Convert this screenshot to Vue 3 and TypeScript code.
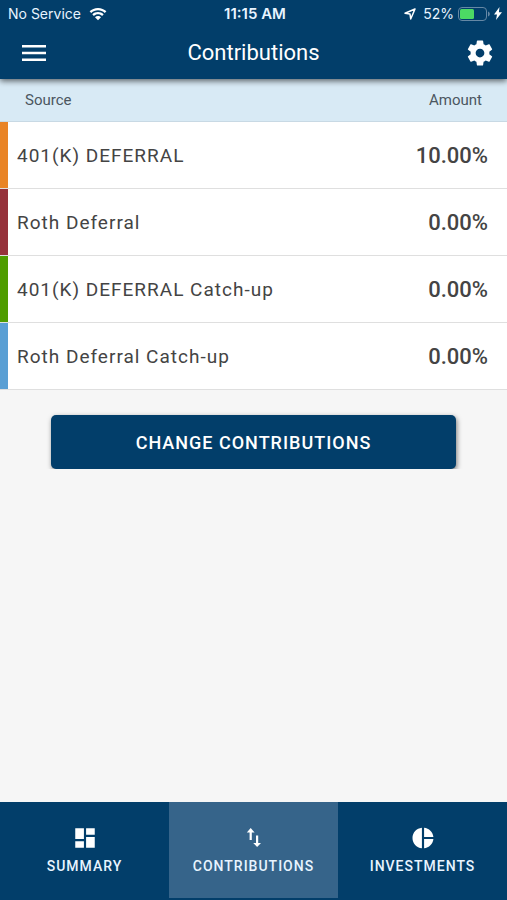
<script setup lang="ts">
interface Contribution {
  source: string
  amount: string
  color: string
}

const contributions: Contribution[] = [
  { source: '401(K) DEFERRAL', amount: '10.00%', color: '#e98426' },
  { source: 'Roth Deferral', amount: '0.00%', color: '#96323b' },
  { source: '401(K) DEFERRAL Catch-up', amount: '0.00%', color: '#4f9c00' },
  { source: 'Roth Deferral Catch-up', amount: '0.00%', color: '#5a9fd4' },
]
</script>

<template>
  <div class="screen">
    <header class="top">
      <div class="status">
        <div class="status-left">
          <span>No Service</span>
          <svg width="18" height="14" viewBox="0 0 18 14" fill="#fff" aria-hidden="true">
            <path d="M9 1C5.700 1 2.700 2.300 .600 4.300L2.200 6C4 4.300 6.400 3.300 9 3.300s5 1 6.800 2.700l1.600-1.700C15.300 2.300 12.300 1 9 1z" />
            <path d="M9 5C6.800 5 4.800 5.900 3.300 7.200l1.600 1.700C6 7.900 7.400 7.300 9 7.300s3 .600 4.100 1.600l1.600-1.700C13.200 5.900 11.200 5 9 5z" />
            <path d="M9 9c-1.200 0-2.200.500-3 1.200l3 3 3-3C11.200 9.500 10.200 9 9 9z" />
          </svg>
        </div>
        <strong class="clock">11:15 AM</strong>
        <div class="status-right">
          <svg class="locate" width="12" height="12" viewBox="0 0 12 12" fill="none" stroke="#fff" stroke-width="1.500" stroke-linejoin="round" aria-hidden="true">
            <path d="M11 1 1 5.300l5 .700.700 5z" />
          </svg>
          <span>52%</span>
          <svg width="32" height="14" viewBox="0 0 32 14" aria-hidden="true">
            <rect x=".500" y=".500" width="28" height="13" rx="3.500" fill="none" stroke="#6688a5" />
            <rect x="2" y="2" width="14" height="10" rx="1.500" fill="#4cd964" />
            <path d="M30 4.500c1.300.400 1.800 1.300 1.800 2.500s-.500 2.100-1.800 2.500z" fill="#6688a5" />
          </svg>
          <svg width="8" height="13" viewBox="0 0 8 13" fill="#fff" aria-hidden="true">
            <path d="M5.500 0 0 7.400h3L2 13l6-7.700H4.900z" />
          </svg>
        </div>
      </div>
      <div class="bar">
        <button class="icon-button menu" type="button" aria-label="Menu">
          <svg width="24" height="18" viewBox="0 0 24 18" fill="#fff" aria-hidden="true">
            <path d="M0 1h24v2.500H0zM0 7.700h24v2.500H0zM0 14.400h24v2.500H0z" />
          </svg>
        </button>
        <h1>Contributions</h1>
        <button class="icon-button settings" type="button" aria-label="Settings">
          <svg width="30" height="30" viewBox="0 0 24 24" fill="#fff" aria-hidden="true">
            <path d="M19.430 12.980c.040-.320.070-.640.070-.980s-.030-.660-.070-.980l2.110-1.650c.190-.150.240-.420.120-.640l-2-3.460c-.120-.220-.390-.300-.610-.220l-2.490 1c-.520-.400-1.080-.730-1.690-.980l-.380-2.650C14.460 2.180 14.250 2 14 2h-4c-.250 0-.460.180-.490.420l-.380 2.650c-.610.250-1.170.590-1.690.980l-2.490-1c-.230-.090-.490 0-.610.220l-2 3.460c-.130.220-.070.490.120.640l2.110 1.650c-.040.320-.070.650-.070.980s.030.660.070.980l-2.110 1.650c-.190.150-.240.420-.120.640l2 3.460c.120.220.390.300.610.220l2.490-1c.520.400 1.080.730 1.690.980l.380 2.650c.030.240.240.420.490.420h4c.250 0 .460-.180.490-.420l.380-2.650c.610-.250 1.170-.590 1.690-.980l2.490 1c.230.090.490 0 .610-.220l2-3.460c.120-.220.070-.490-.120-.640l-2.110-1.650zM12 15.500c-1.930 0-3.500-1.570-3.500-3.500s1.570-3.500 3.500-3.500 3.500 1.570 3.500 3.500-1.570 3.500-3.500 3.500z" />
          </svg>
        </button>
      </div>
    </header>

    <main>
      <table>
        <thead>
          <tr>
            <th scope="col">Source</th>
            <th scope="col" class="amount">Amount</th>
          </tr>
        </thead>
        <tbody>
          <tr v-for="item in contributions" :key="item.source">
            <td>
              <div class="source">
                <span class="swatch" :style="{ background: item.color }"></span>
                <span>{{ item.source }}</span>
              </div>
            </td>
            <td class="amount">{{ item.amount }}</td>
          </tr>
        </tbody>
      </table>
      <div class="actions">
        <button class="change" type="button">CHANGE CONTRIBUTIONS</button>
      </div>
    </main>

    <nav class="tabs">
      <a href="#summary">
        <svg width="26" height="26" viewBox="0 0 24 24" fill="#fff" aria-hidden="true">
          <path d="M3 13h8V3H3v10zm0 8h8v-6H3v6zm10 0h8V11h-8v10zm0-18v6h8V3h-8z" />
        </svg>
        <span>SUMMARY</span>
      </a>
      <a href="#contributions" class="active" aria-current="page">
        <svg width="26" height="26" viewBox="0 0 26 26" fill="#fff" aria-hidden="true">
          <path d="M9.700 3 5.800 7.500h2.800V15h2.200V7.500h2.800zM15 10.500V18h-2.800l3.900 4 3.900-4h-2.800v-7.500z" />
        </svg>
        <span>CONTRIBUTIONS</span>
      </a>
      <a href="#investments">
        <svg width="26" height="26" viewBox="0 0 24 24" fill="#fff" aria-hidden="true">
          <path d="M11 2.500v19C6 21 2.300 17 2.300 12S6 3 11 2.500zM13 2.500V11h8.600C21.200 6.500 17.500 2.900 13 2.500zM13 13v8.500c4.500-.400 8.200-4 8.600-8.500z" />
        </svg>
        <span>INVESTMENTS</span>
      </a>
    </nav>
  </div>
</template>

<style>
body {
  margin: 0;
}
</style>

<style scoped>
* {
  box-sizing: border-box;
}

.screen {
  min-height: 100vh;
  display: flex;
  flex-direction: column;
  background: #f6f6f6;
  color: #444;
  font-family: Roboto, "Liberation Sans", sans-serif;
}

button {
  border: 0;
  padding: 0;
  font: inherit;
  color: #fff;
}

svg {
  display: block;
}

.top {
  position: relative;
  background: #023e6a;
  color: #fff;
  box-shadow: 0 2px 6px rgba(0, 0, 0, 0.6);
}

.status {
  display: grid;
  grid-template-columns: 1fr auto 1fr;
  align-items: center;
  height: 27px;
  padding: 0 5px 0 8px;
  color: #e8f4ff;
  font: 14px/20px Inter, sans-serif;
}

.status-left,
.status-right {
  display: flex;
  align-items: center;
  gap: 8px;
}

.status-right {
  justify-content: flex-end;
  gap: 4px;
}

.locate {
  margin-right: 3px;
}

.clock {
  font-size: 15px;
  font-weight: 600;
}

.bar {
  display: grid;
  grid-template-columns: 1fr auto 1fr;
  align-items: center;
  height: 52px;
  padding: 0 12px;
}

.icon-button {
  background: none;
}

.menu {
  justify-self: start;
  padding-left: 10px;
}

.settings {
  justify-self: end;
}

h1 {
  margin: 0;
  font-size: 22px;
  font-weight: 400;
  line-height: 28px;
}

main {
  flex: 1;
}

table {
  width: 100%;
  border-collapse: separate;
  border-spacing: 0;
}

th {
  height: 43px;
  padding: 0 25px;
  background: #d8eaf5;
  border-bottom: 1px solid #c8d9e4;
  color: #4b5660;
  font-size: 15px;
  font-weight: 400;
  text-align: left;
}

td {
  height: 67px;
  padding: 0;
  background: #fff;
  border-bottom: 1px solid #dfdfdf;
  font-size: 19px;
  letter-spacing: 1px;
}

.source {
  display: flex;
  align-items: center;
  gap: 9px;
}

.swatch {
  width: 8px;
  height: 66px;
}

.amount {
  text-align: right;
}

td.amount {
  padding-right: 19px;
  font-size: 22px;
  font-weight: 500;
  letter-spacing: normal;
}

.actions {
  padding: 25px 10% 0;
  overflow: hidden;
}

.change {
  display: block;
  width: 100%;
  height: 54px;
  border-radius: 5px;
  background: #023e6a;
  box-shadow: 1px 2px 5px rgba(0, 0, 0, 0.5);
  font-size: 18px;
  font-weight: 500;
  letter-spacing: 1px;
}

.tabs {
  display: grid;
  grid-template-columns: repeat(3, 1fr);
  padding-bottom: 2px;
  background: #023e6a;
}

.tabs a {
  display: flex;
  flex-direction: column;
  align-items: center;
  justify-content: center;
  gap: 5px;
  height: 96px;
  color: #e8f4ff;
  font-size: 14px;
  font-weight: 500;
  line-height: 20px;
  letter-spacing: 1px;
  text-decoration: none;
}

.tabs .active {
  background: #36648a;
}
</style>
